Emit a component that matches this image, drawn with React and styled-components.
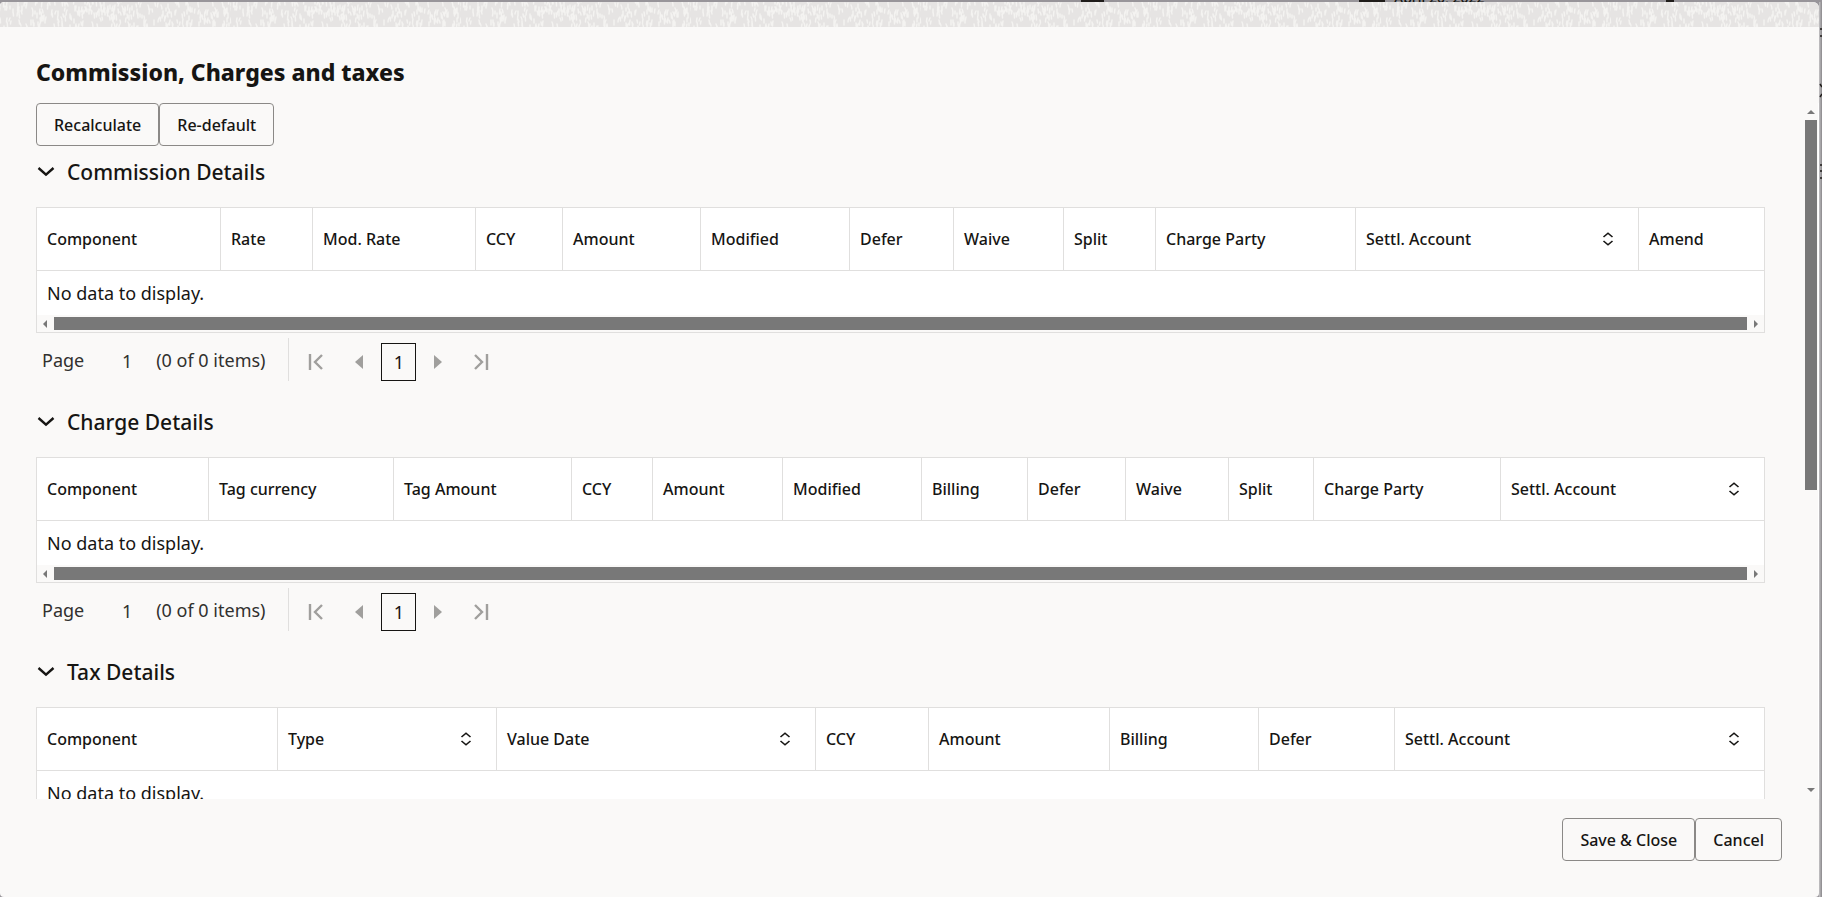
import React from 'react';
import styled, { createGlobalStyle } from 'styled-components';

const GlobalStyle = createGlobalStyle`
    * {
        box-sizing: border-box;
    }

    html, body, #root {
        height: 100%;
    }

    body {
        margin: 0;
        background: #98959a;
        color: #161513;
        font-family: 'Noto Sans', 'Open Sans', sans-serif;
        font-size: 18px;
        overflow: hidden;
    }
`

const Backdrop = styled.div`
    display: flex;
    flex-direction: column;
    height: 100%;
    background: #98959a;
`

const BehindTop = styled.div`
    display: flex;
    justify-content: flex-end;
    align-items: flex-end;
    gap: 9px;
    height: 2px;
    padding-right: 148px;
    overflow: hidden;
    font-size: 14px;
    line-height: 8px;
    font-weight: 500;
`

const BehindMark = styled.span`
    width: ${({ $width }) => $width}px;
    height: 2px;
    margin-right: ${({ $after }) => $after || 0}px;
    background: #1f1c1a;
`

const BehindDate = styled.span`
    width: 263px;
`

const BehindRight = styled.svg`
    display: block;
    flex: none;
    width: 3px;
    height: 100%;
    background: linear-gradient(to right, #c4c3c5, #8a888b);
`

const Row = styled.div`
    display: flex;
    flex: 1;
    min-height: 0;
`

const Dialog = styled.section`
    display: flex;
    flex-direction: column;
    flex: 1;
    min-width: 0;
    background: #faf9f8;
    border-radius: 4px 6px 4px 4px;
    overflow: hidden;
`

const Strip = styled.svg`
    display: block;
    flex: none;
    width: 100%;
    height: 25px;
`

const Title = styled.h1`
    margin: 0;
    padding: 28px 36px 14px;
    font-size: 23px;
    line-height: 34px;
    font-weight: 800;
`

const Main = styled.div`
    display: flex;
    flex: 1;
    min-height: 0;
`

const Content = styled.div`
    flex: 1;
    min-width: 0;
    overflow-y: auto;
    scrollbar-width: none;
    padding: 0 38px 0 36px;
`

const ButtonRow = styled.div`
    display: flex;
    justify-content: ${({ $end }) => ($end ? 'flex-end' : 'flex-start')};
`

const Button = styled.button`
    height: 43px;
    padding: 0 17px;
    border: 1px solid #8b8987;
    border-radius: 4px;
    background: transparent;
    color: inherit;
    font: 500 16px/20px 'Noto Sans', sans-serif;
`

const Footer = styled.footer`
    padding: 19px 37px 36px;
`

const Section = styled.section`
    height: 250px;
`

const Heading = styled.h2`
    margin: 0;
    height: 61px;
    padding-top: 10px;
    font-size: 21px;
    line-height: 32px;
    font-weight: 500;
`

const Toggle = styled.button`
    display: flex;
    align-items: center;
    gap: 12px;
    padding: 0;
    border: 0;
    background: none;
    color: inherit;
    font: inherit;
`

const Grid = styled.div`
    background: #fff;
    border: 1px solid #e0dfde;
`

const Table = styled.table`
    width: 100%;
    table-layout: fixed;
    border-collapse: separate;
    border-spacing: 0;
`

const Col = styled.col`
    width: ${({ $width }) => $width}px;
`

const Th = styled.th`
    height: 63px;
    padding: 0 10px;
    border-right: 1px solid #e0dfde;
    border-bottom: 1px solid #e0dfde;
    font-size: 16px;
    line-height: 20px;
    font-weight: 500;
    text-align: left;
    white-space: nowrap;

    &:last-child {
        border-right: 0;
    }
`

const HeaderCell = styled.div`
    display: flex;
    align-items: center;
    justify-content: space-between;
    padding-right: ${({ $sortable }) => ($sortable ? 14 : 0)}px;
`

const EmptyCell = styled.td`
    height: 44px;
    padding: 0 10px;
    line-height: 24px;
`

const HorizontalBar = styled.div`
    display: flex;
    align-items: center;
    justify-content: space-between;
    height: 17px;
    padding: 0 5px;
    gap: 4px;
    background: #faf9f8;
`

const VerticalBar = styled.div`
    display: flex;
    flex-direction: column;
    align-items: center;
    width: 16px;
    padding: 5px 0;
    gap: 4px;
    background: #faf9f8;
    border-right: 1px solid #fff;
`

const Thumb = styled.div`
    flex: 1;
    height: 13px;
    background: #787878;
`

const VerticalThumb = styled.div`
    width: 12px;
    height: 54%;
    margin-bottom: auto;
    background: #787878;
`

const Pager = styled.nav`
    display: flex;
    align-items: center;
    height: 43px;
    margin-top: 5px;
    padding-left: 6px;
    color: #31302e;
`

const PageInput = styled.input`
    width: 18px;
    margin: 2px 20px 0 34px;
    padding: 0;
    border: 0;
    background: none;
    color: inherit;
    font: inherit;
    text-align: center;
`

const PagerControls = styled.div`
    display: flex;
    align-items: center;
    height: 43px;
    margin-left: 23px;
    padding: 5px 0 0 4px;
    border-left: 1px solid #e0dfde;
`

const PageButton = styled.button`
    display: flex;
    align-items: center;
    justify-content: center;
    width: ${({ $current }) => ($current ? 35 : 44)}px;
    height: 38px;
    padding: 0;
    border: ${({ $current }) => ($current ? '1px solid #161513' : 0)};
    background: none;
    color: ${({ $current }) => ($current ? '#161513' : '#a09f9d')};
    font: inherit;
`

const sections = [
    {
        title: 'Commission Details',
        columns: [
            { label: 'Component', width: 184 },
            { label: 'Rate', width: 92 },
            { label: 'Mod. Rate', width: 163 },
            { label: 'CCY', width: 87 },
            { label: 'Amount', width: 138 },
            { label: 'Modified', width: 149 },
            { label: 'Defer', width: 104 },
            { label: 'Waive', width: 110 },
            { label: 'Split', width: 92 },
            { label: 'Charge Party', width: 200 },
            { label: 'Settl. Account', width: 283, sortable: true },
            { label: 'Amend', width: 125 },
        ],
    },
    {
        title: 'Charge Details',
        columns: [
            { label: 'Component', width: 172 },
            { label: 'Tag currency', width: 185 },
            { label: 'Tag Amount', width: 178 },
            { label: 'CCY', width: 81 },
            { label: 'Amount', width: 130 },
            { label: 'Modified', width: 139 },
            { label: 'Billing', width: 106 },
            { label: 'Defer', width: 98 },
            { label: 'Waive', width: 103 },
            { label: 'Split', width: 85 },
            { label: 'Charge Party', width: 187 },
            { label: 'Settl. Account', width: 263, sortable: true },
        ],
    },
    {
        title: 'Tax Details',
        columns: [
            { label: 'Component', width: 241 },
            { label: 'Type', width: 219, sortable: true },
            { label: 'Value Date', width: 319, sortable: true },
            { label: 'CCY', width: 113 },
            { label: 'Amount', width: 181 },
            { label: 'Billing', width: 149 },
            { label: 'Defer', width: 136 },
            { label: 'Settl. Account', width: 369, sortable: true },
        ],
    },
]

const Arrow = ({ dir }) => {
    const paths = {
        left: 'M5 0v8L1 4z',
        right: 'M3 0v8l4-4z',
        up: 'M0 6h8L4 2z',
        down: 'M0 2h8L4 6z',
    }

    return (
        <svg width="8" height="8" viewBox="0 0 8 8" fill="#787878" aria-hidden="true">
            <path d={paths[dir]} />
        </svg>
    )
}

const Chevron = () => (
    <svg width="19" height="20" viewBox="0 0 19 20" fill="none" stroke="currentColor" strokeWidth="2.4" aria-hidden="true">
        <path d="M2.5 6l7.5 6.6L17.5 6" />
    </svg>
)

const SortIcon = () => (
    <svg width="12" height="16" viewBox="0 0 12 16" fill="none" stroke="currentColor" strokeWidth="1.6" aria-hidden="true">
        <path d="M1.5 6L6 2.2 10.5 6M1.5 10L6 13.8l4.5-3.8" />
    </svg>
)

const PageEdge = ({ last }) => (
    <svg width="16" height="18" viewBox="0 0 16 18" fill="none" stroke="currentColor" strokeWidth="2.4" aria-hidden="true">
        <path d={last ? 'M13 1v16M1 2l7 7-7 7' : 'M3 1v16M15 2L8 9l7 7'} />
    </svg>
)

const PageStep = ({ next }) => (
    <svg width="8" height="14" viewBox="0 0 8 14" fill="currentColor" aria-hidden="true">
        <path d={next ? 'M0 0v14l8-7z' : 'M8 0v14L0 7z'} />
    </svg>
)

const noise = (n) => {
    const s = Math.sin(n * 12.9898) * 43758.5453

    return s - Math.floor(s)
}

// short upright strokes scattered over a tile, with a slight lean
const strokes = Array.from({ length: 300 }, (_, i) => {
    const x = Math.round(noise(i + 1) * 230)
    const y = Math.round(noise(i + 501) * 27) - 3
    const lean = Math.round(noise(i + 901) * 4) - 2

    return `M${x} ${y}q${lean / 2} 2 ${lean / 2} ${3 + (i % 3)}`
}).join('')

const Texture = () => (
    <Strip aria-hidden="true">
        <defs>
            <pattern id="texture" width="230" height="25" patternUnits="userSpaceOnUse">
                <rect width="230" height="25" fill="#e6e4e3" />
                <path d={strokes} fill="none" stroke="#f4f3f1" strokeWidth="1.5" strokeLinecap="round" />
            </pattern>
        </defs>
        <rect width="100%" height="25" fill="url(#texture)" />
    </Strip>
)

const Pagination = ({ title }) => (
    <Pager aria-label={`${title} pages`}>
        <span>Page</span>
        <PageInput aria-label={`${title} page`} defaultValue="1" />
        <span>(0 of 0 items)</span>
        <PagerControls>
            <PageButton aria-label="First page"><PageEdge /></PageButton>
            <PageButton aria-label="Previous page"><PageStep /></PageButton>
            <PageButton $current>1</PageButton>
            <PageButton aria-label="Next page"><PageStep next /></PageButton>
            <PageButton aria-label="Last page"><PageEdge last /></PageButton>
        </PagerControls>
    </Pager>
)

const Details = ({ title, columns }) => (
    <Section>
        <Heading>
            <Toggle aria-expanded="true"><Chevron />{title}</Toggle>
        </Heading>
        <Grid>
            <Table>
                <colgroup>
                    {columns.map(({ label, width }) => <Col key={label} $width={width} />)}
                </colgroup>
                <thead>
                    <tr>
                        {columns.map(({ label, sortable }) => (
                            <Th key={label}>
                                <HeaderCell $sortable={sortable}>
                                    {label}
                                    {sortable && <SortIcon />}
                                </HeaderCell>
                            </Th>
                        ))}
                    </tr>
                </thead>
                <tbody>
                    <tr>
                        <EmptyCell colSpan={columns.length}>No data to display.</EmptyCell>
                    </tr>
                </tbody>
            </Table>
            <HorizontalBar>
                <Arrow dir="left" />
                <Thumb />
                <Arrow dir="right" />
            </HorizontalBar>
        </Grid>
        <Pagination title={title} />
    </Section>
)

const App = () => {
    return (
        <Backdrop>
            <GlobalStyle />
            <BehindTop aria-hidden="true">
                <BehindMark $width={23} $after={246} />
                <BehindMark $width={26} />
                <BehindDate>April 20, 2022</BehindDate>
                <BehindMark $width={8} />
            </BehindTop>
            <Row>
                <Dialog role="dialog" aria-labelledby="dialog-title">
                    <Texture />
                    <Title id="dialog-title">Commission, Charges and taxes</Title>
                    <Main>
                        <Content>
                            <ButtonRow>
                                <Button>Recalculate</Button>
                                <Button>Re-default</Button>
                            </ButtonRow>
                            {sections.map((section) => (
                                <Details key={section.title} {...section} />
                            ))}
                        </Content>
                        <VerticalBar>
                            <Arrow dir="up" />
                            <VerticalThumb />
                            <Arrow dir="down" />
                        </VerticalBar>
                    </Main>
                    <Footer>
                        <ButtonRow $end>
                            <Button>Save &amp; Close</Button>
                            <Button>Cancel</Button>
                        </ButtonRow>
                    </Footer>
                </Dialog>
                <BehindRight aria-hidden="true">
                    <path d="M1 27h2M1 34h2M1 82l2 3M1 95l2-3M1 163h2M1 169h2M1 176h2" stroke="#1f1c1a" strokeWidth="1.5" />
                </BehindRight>
            </Row>
        </Backdrop>
    )
}

export default App;
